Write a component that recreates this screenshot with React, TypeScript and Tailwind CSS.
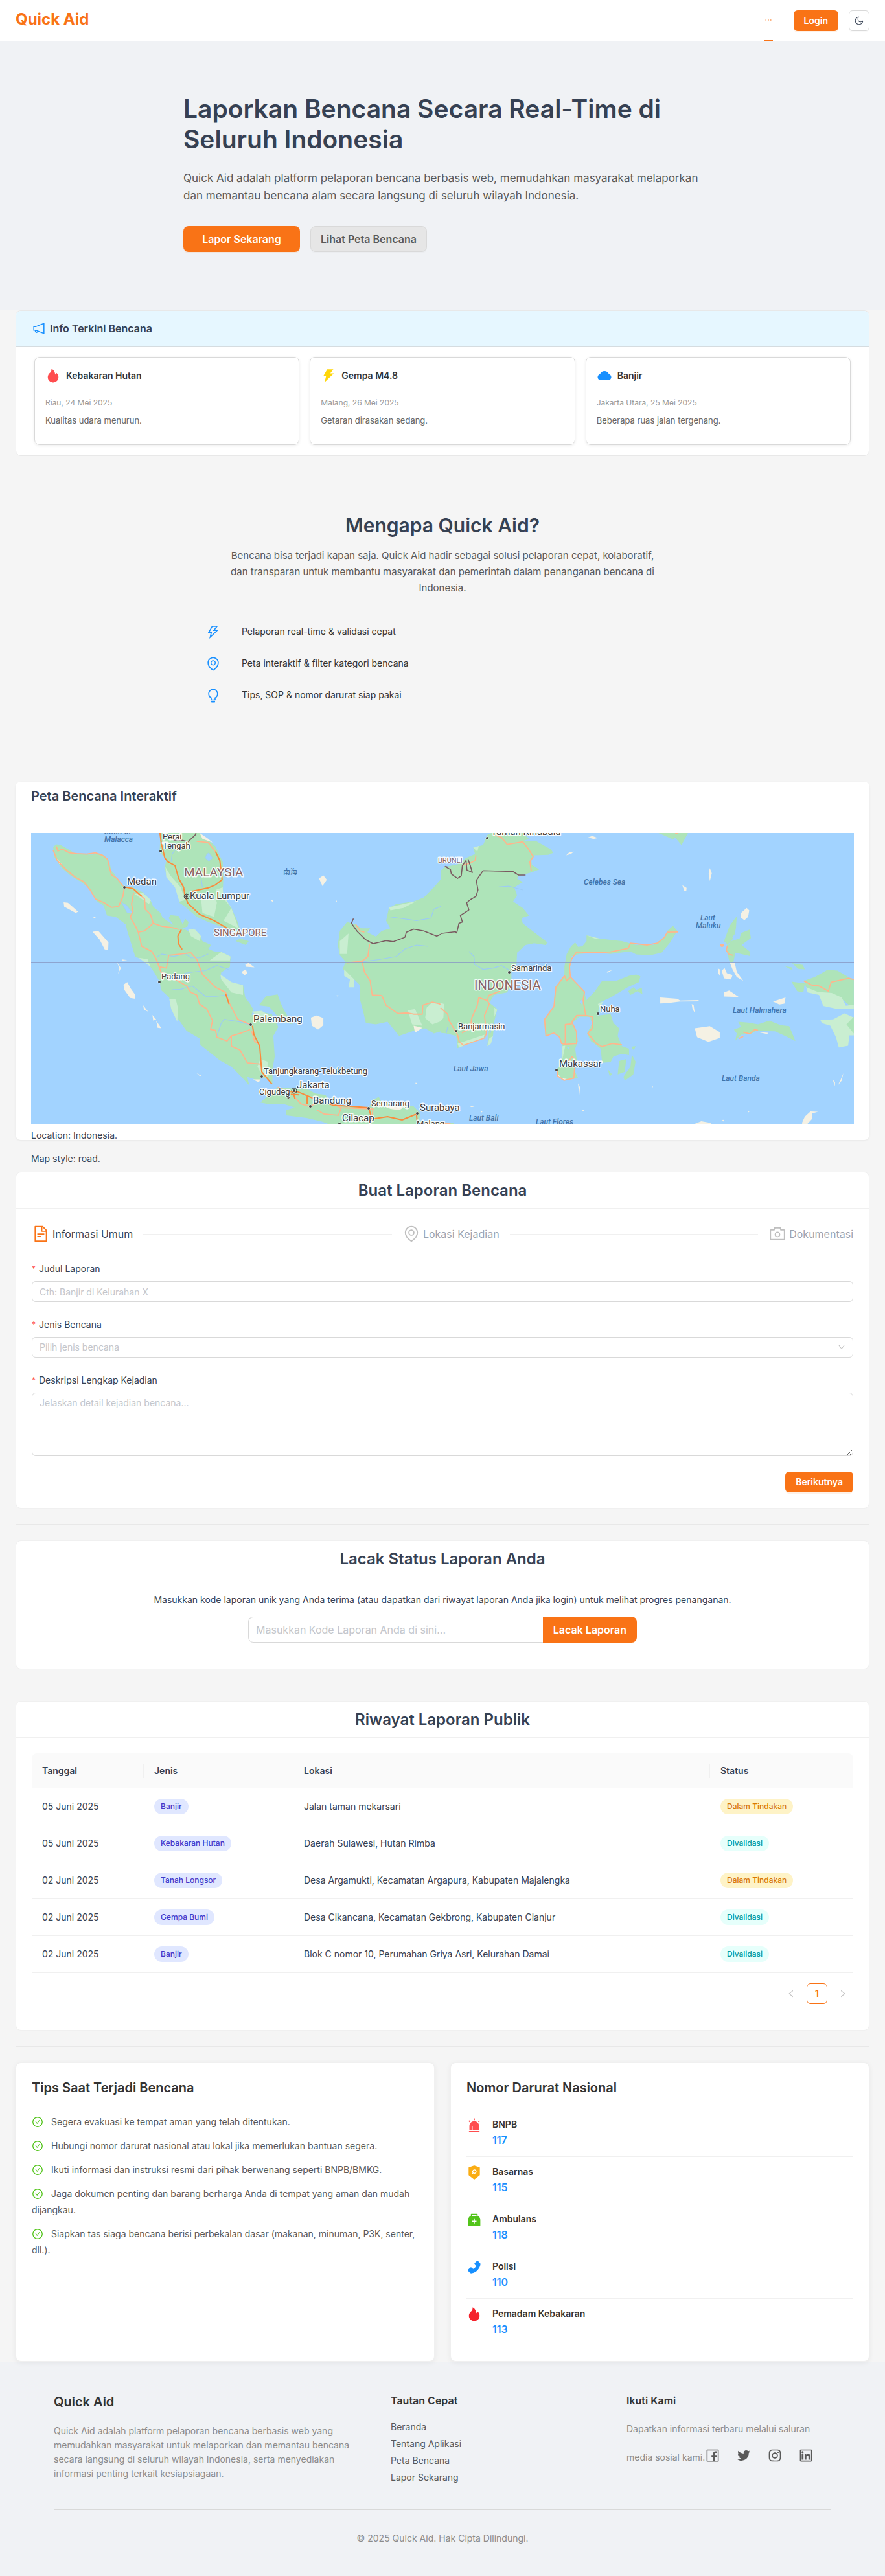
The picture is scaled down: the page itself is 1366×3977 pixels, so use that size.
import type { ReactNode } from "react";
import {
  AiFillAlert,
  AiFillCloud,
  AiFillFire,
  AiFillMedicineBox,
  AiFillPhone,
  AiFillSecurityScan,
  AiFillThunderbolt,
  AiOutlineBulb,
  AiOutlineCamera,
  AiOutlineCheckCircle,
  AiOutlineDown,
  AiOutlineEllipsis,
  AiOutlineEnvironment,
  AiOutlineFacebook,
  AiOutlineFileText,
  AiOutlineInstagram,
  AiOutlineLeft,
  AiOutlineLinkedin,
  AiOutlineMoon,
  AiOutlineNotification,
  AiOutlineRight,
  AiOutlineThunderbolt,
  AiOutlineTwitter,
} from "react-icons/ai";

function Divider() {
  return <hr className="my-6 border-0 border-t border-[#e8e8e8]" />;
}

function Panel({ title, children }: { title: string; children: ReactNode }) {
  return (
    <section className="rounded-lg border border-[#f0f0f0] bg-white">
      <h2 className="flex h-14 items-center justify-center border-b border-[#f0f0f0] px-6 text-2xl font-semibold text-gray-700">
        {title}
      </h2>
      <div className="p-6">{children}</div>
    </section>
  );
}

function Header() {
  return (
    <header className="flex h-16 items-center justify-between border-b border-[#f0f0f0] bg-white px-6">
      <a href="#" className="pb-1 text-2xl font-bold text-[#f97316]">
        Quick Aid
      </a>
      <div className="flex h-full items-center gap-4">
        <nav className="mr-4 flex h-full items-center border-b-2 border-[#f97316]">
          <button type="button" aria-label="Menu" className="text-[#f97316]">
            <AiOutlineEllipsis size={14} />
          </button>
        </nav>
        <button
          type="button"
          className="h-8 rounded-md bg-[#f97316] px-4 text-sm font-semibold text-white shadow-[0_2px_0_rgba(249,115,22,0.1)]"
        >
          Login
        </button>
        <button
          type="button"
          aria-label="Mode gelap"
          className="flex size-8 items-center justify-center rounded-md border border-[#d9d9d9] bg-white text-gray-700 shadow-[0_2px_0_rgba(0,0,0,0.02)]"
        >
          <AiOutlineMoon size={16} />
        </button>
      </div>
    </header>
  );
}

function Hero() {
  return (
    <section className="bg-[#f0f2f5] px-6 pt-20 pb-[90px]">
      <div className="mx-auto max-w-[800px]">
        <h1 className="mb-6 text-[39px] leading-[47px] font-semibold text-gray-700">
          Laporkan Bencana Secara Real-Time di Seluruh Indonesia
        </h1>
        <p className="mb-[33px] text-[17px] leading-[27px] text-[#595959]">
          Quick Aid adalah platform pelaporan bencana berbasis web, memudahkan masyarakat melaporkan dan memantau
          bencana alam secara langsung di seluruh wilayah Indonesia.
        </p>
        <div className="flex gap-4">
          <button
            type="button"
            className="h-10 w-[180px] rounded-lg bg-[#f97316] text-base font-semibold text-white shadow-[0_2px_0_rgba(249,115,22,0.1)]"
          >
            Lapor Sekarang
          </button>
          <button
            type="button"
            className="h-10 w-[180px] rounded-lg border border-[#d9d9d9] bg-[#e6e6e6] text-base font-semibold text-[#595959] shadow-[0_2px_0_rgba(0,0,0,0.02)]"
          >
            Lihat Peta Bencana
          </button>
        </div>
      </div>
    </section>
  );
}

const news = [
  { icon: <AiFillFire size={24} color="#ff4d4f" />, title: "Kebakaran Hutan", date: "Riau, 24 Mei 2025", text: "Kualitas udara menurun." },
  { icon: <AiFillThunderbolt size={24} color="#ffd60a" />, title: "Gempa M4.8", date: "Malang, 26 Mei 2025", text: "Getaran dirasakan sedang." },
  { icon: <AiFillCloud size={24} color="#1890ff" />, title: "Banjir", date: "Jakarta Utara, 25 Mei 2025", text: "Beberapa ruas jalan tergenang." },
];

function LatestInfo() {
  return (
    <section className="overflow-hidden rounded-lg border border-[#e8e8e8] bg-white">
      <h2 className="flex h-[55px] items-center gap-1.5 border-b border-[#d5dce0] bg-[#e6f7ff] px-6 text-base font-semibold text-gray-700">
        <AiOutlineNotification size={22} color="#1890ff" />
        Info Terkini Bencana
      </h2>
      <div className="grid grid-cols-3 gap-4 px-7 py-4">
        {news.map((n) => (
          <article key={n.title} className="h-34 rounded-lg border border-[#d9d9d9] p-4 shadow-[0_1px_4px_rgba(0,0,0,0.08)]">
            <h3 className="mb-5 flex h-6 items-center gap-2 text-sm font-semibold text-[#333333]">
              {n.icon}
              {n.title}
            </h3>
            <p className="mb-1.5 text-xs leading-5 text-[#999999]">{n.date}</p>
            <p className="text-[13px] leading-[22px] text-[#666666]">{n.text}</p>
          </article>
        ))}
      </div>
    </section>
  );
}

const reasons = [
  { icon: <AiOutlineThunderbolt size={24} color="#1890ff" />, text: "Pelaporan real-time & validasi cepat" },
  { icon: <AiOutlineEnvironment size={24} color="#1890ff" />, text: "Peta interaktif & filter kategori bencana" },
  { icon: <AiOutlineBulb size={24} color="#1890ff" />, text: "Tips, SOP & nomor darurat siap pakai" },
];

function WhyUs() {
  return (
    <section className="pt-10 pb-[47px]">
      <h2 className="text-center text-3xl leading-9 font-semibold text-gray-700">Mengapa Quick Aid?</h2>
      <p className="mx-auto mt-4 max-w-[670px] text-center text-[15px] leading-[25px] text-[#595959]">
        Bencana bisa terjadi kapan saja. Quick Aid hadir sebagai solusi pelaporan cepat, kolaboratif, dan transparan
        untuk membantu masyarakat dan pemerintah dalam penanganan bencana di Indonesia.
      </p>
      <ul className="mx-auto mt-11 max-w-[732px]">
        {reasons.map((r) => (
          <li key={r.text} className="flex h-[49px] items-start gap-8">
            <span>{r.icon}</span>
            <span className="text-sm leading-[22px] text-[#333333]">{r.text}</span>
          </li>
        ))}
      </ul>
    </section>
  );
}

const cities: [string, number, number, number, number, number][] = [
  ["Medan", 148, 80, 15, 144, 84],
  ["Kuala Lumpur", 245, 102, 15, 240, 98],
  ["Padang", 201, 226, 13, 198, 230],
  ["Palembang", 343, 292, 15, 339, 296],
  ["Tanjungkarang-Telukbetung", 359, 372, 13, 356, 376],
  ["Jakarta", 410, 394, 15, 406, 398],
  ["Cigudeg", 352, 404, 13, 397, 408],
  ["Bandung", 435, 418, 15, 431, 422],
  ["Semarang", 525, 422, 13, 521, 425],
  ["Surabaya", 600, 429, 15, 596, 433],
  ["Cilacap", 480, 445, 15, 476, 449],
  ["Malang", 595, 453, 13, 592, 460],
  ["Perai", 203, 10, 13, 200, 28],
  ["Tengah", 203, 24, 13, 200, 28],
  ["Taman Kinabalu", 710, 3, 15, 704, 8],
  ["Samarinda", 741, 213, 13, 738, 215],
  ["Banjarmasin", 659, 303, 13, 656, 306],
  ["Nuha", 878, 276, 13, 875, 279],
  ["Makassar", 815, 361, 15, 811, 366],
];

const seas: [string, number, number][] = [
  ["Strait of", 113, 2],
  ["Malacca", 113, 14],
  ["Celebes Sea", 853, 80],
  ["Laut", 1033, 135],
  ["Maluku", 1026, 147],
  ["Laut Jawa", 652, 368],
  ["Laut Bali", 676, 444],
  ["Laut Flores", 779, 450],
  ["Laut Halmahera", 1083, 278],
  ["Laut Banda", 1066, 383],
];

const countries: [string, number, number, number][] = [
  ["MALAYSIA", 236, 67, 19],
  ["SINGAPORE", 282, 159, 15],
  ["BRUNEI", 628, 46, 11],
  ["INDONESIA", 684, 242, 20],
];

function IndonesiaMap() {
  return (
    <svg
      role="img"
      aria-label="Peta Indonesia"
      viewBox="0 0 1270 450"
      preserveAspectRatio="xMidYMid slice"
      className="block h-[450px] w-full bg-[#a2d3ff]"
    >
      <rect width="1270" height="450" fill="#a2d3ff" />
      {/* western half: Sumatra, the Malay peninsula, Java, west Borneo */}
      <g transform="translate(-48 -86) scale(0.4464 0.3954)">
        <g fill="#aee4b9">
          <path d="M184 272L195 262L210 265L235 280L262 300L320 302L345 297L360 305L378 328L385 365L398 380L402 395L430 425L460 430L495 450L520 480L530 505L555 530L562 548L590 570L600 577L583 550L590 538L618 542L632 575L640 552L652 565L648 583L630 590L650 600L665 590L690 612L700 640L730 655L720 670L740 680L765 682L797 700L795 740L765 762L762 785L805 805L840 810L848 860L865 885L875 905L870 930L895 915L940 925L962 975L945 1010L950 1090L942 1140L942 1200L925 1180L905 1170L895 1190L878 1178L855 1170L862 1203L835 1170L800 1130L760 1105L693 1045L690 1020L645 990L620 950L592 905L585 860L556 830L553 800L535 765L505 715L468 702L440 600L435 575L400 545L370 540L358 500L335 485L305 430L275 405L245 385L210 350L187 310Z" />
          <path d="M555 217L690 217L720 245L745 270L770 330L772 400L770 460L800 510L820 560L830 595L800 600L770 585L720 565L680 545L640 505L620 490L635 470L610 430L575 385L570 350L575 325L552 290Z" />
          <path d="M960 1210L1010 1215L1060 1215L1090 1235L1125 1240L1150 1280L1190 1283L1275 1290L1290 1258L1310 1248L1320 1270L1430 1285L1452 1310L1450 1340L1568 1350L1568 1360L1150 1360L1115 1345L1060 1330L990 1320L988 1300L1020 1290L980 1275L925 1275L900 1270L935 1235Z" />
          <path d="M895 890L920 855L960 848L970 880L985 915L1012 965L975 955L950 920L930 895Z" />
          <path d="M1215 570L1200 565L1175 600L1168 655L1175 695L1195 720L1185 750L1225 790L1243 810L1245 870L1255 910L1265 960L1300 965L1340 955L1380 1010L1430 990L1470 980L1500 1000L1530 990L1568 1005L1568 345L1540 350L1535 385L1500 430L1465 470L1430 485L1370 495L1345 510L1335 560L1350 590L1320 600L1300 622L1270 605L1280 590L1250 590L1230 575Z" />
          <path d="M690 660L720 668L712 695L695 690ZM815 640L830 630L860 640L850 655Z" />
        </g>
        <g fill="#c9eed1">
          <path d="M695 470L740 450L750 490L740 545L700 530ZM572 350L590 385L625 430L640 480L620 485L605 430L575 390Z" />
          <path d="M773 560L800 510L770 470L745 440L770 430L772 460L800 510L825 590Z" />
          <path d="M725 715L765 682L797 700L795 715ZM762 770L800 800L840 812L840 850L800 840L765 790ZM585 865L608 868L615 900L613 955L592 905Z" />
          <path d="M650 592L675 595L695 620L690 640L660 620ZM465 455L495 452L522 480L515 495ZM890 1130L900 1100L925 1110L925 1170L900 1150ZM870 915L905 912L930 930L895 935ZM480 705L510 710L520 740Z" />
          <path d="M1345 508L1440 484L1395 510L1350 520ZM1175 640L1205 610L1200 690L1175 690ZM1475 900L1495 878L1530 885L1530 950L1495 965L1470 940ZM1410 910L1435 905L1460 970L1425 965ZM1190 750L1225 790L1225 820L1205 820L1210 790L1190 775Z" />
        </g>
        <g fill="#f5f1e4">
          <path d="M220 488L235 490L270 525L262 530L222 505ZM320 603L340 600L375 645L374 674L362 672L345 635ZM427 810L440 800L452 825L468 850L468 865L450 862L430 830ZM495 890L512 915L498 908ZM527 928L540 945L530 950ZM540 950L558 980L545 978ZM404 722L418 745L408 768L413 745ZM422 711L440 714L424 716ZM320 542L334 550L325 550Z" />
          <path d="M1075 938L1095 930L1118 940L1118 968L1100 985L1078 970ZM1103 395L1118 383L1130 400L1115 425ZM848 730L860 725L880 742L850 740ZM835 760L850 750L855 765L845 773ZM935 480L943 480L943 487ZM1160 483L1165 482L1164 488ZM1430 970L1460 978L1435 998ZM680 1156L697 1165L690 1166ZM1330 1285L1360 1265L1395 1290L1380 1300L1350 1295ZM690 217L720 240L735 255L700 240ZM195 315L215 342L205 338ZM875 1180L900 1180L895 1192ZM1435 1193L1443 1193L1440 1199ZM1162 852L1170 851L1168 857Z" />
        </g>
        <g fill="none" stroke="#9ccbf5" strokeWidth="1.2">
          <path d="M592 330L595 300L610 275M700 430L695 390L680 360M545 700L560 690L600 700L640 688L660 705L690 705L720 690M600 790L640 765L670 760L710 755L750 735L790 750M595 830L625 828L665 815L710 855L745 855L790 850M750 1010L765 960L775 945L830 955L860 965M1348 545L1440 560L1490 550L1500 515L1540 497M1255 720L1310 712L1370 700L1400 670L1440 655L1480 660" vectorEffect="non-scaling-stroke" />
          <path fill="#a2d3ff" d="M420 488L438 500L458 530L440 530ZM715 300L722 295L735 315L722 328L710 315Z" />
        </g>
        <g fill="none" stroke="#ffb58c" strokeWidth="1.8" strokeLinejoin="round">
          <path d="M184 285L198 325L230 362L260 390L290 408L312 440L330 475L360 490L385 508L410 505L425 465L430 430M195 270L200 288L215 280L240 295L265 298L300 300L330 295L355 305L372 320L378 350L385 380L405 395L425 425M465 440L500 475L502 515L520 535L530 570L560 582L600 588L620 595M530 570L500 600L478 605M462 450L455 495L460 525L450 545L470 585L478 605L490 660L525 680L540 710L550 740L575 745L580 720L583 695L625 690L660 685L680 710L690 740L700 770L745 820L780 840L792 880L822 945L865 965M545 720L556 760L600 785L645 815L660 840L680 850L690 885L715 905L735 950L728 985L745 988L750 1015L785 1030L800 1010L835 998L865 985M800 1010L800 1050L830 1065L855 1115L902 1120M870 990L880 1030L900 1048" vectorEffect="non-scaling-stroke" />
          <path d="M680 250L720 255L745 290M1230 575L1245 600L1260 605M1278 650L1272 700L1252 718L1200 725M1252 718L1260 760L1280 795L1287 850L1320 852L1335 890L1375 922L1410 920L1430 925L1460 925L1462 890L1495 878L1520 885L1545 905L1550 950L1568 975M960 1210L1000 1230M1020 1250L1040 1275L1070 1285L1120 1260L1180 1290L1170 1320L1120 1315L1095 1298M1180 1290L1290 1295L1285 1330" vectorEffect="non-scaling-stroke" />
        </g>
        <g fill="none" stroke="#fb8a3c" strokeWidth="2" strokeLinejoin="round">
          <path d="M553 217L558 260L570 315L580 330L605 345L618 395L635 430L640 465L650 492L690 535L740 560L795 595M745 290L760 325L768 400L745 420L720 432L665 445M627 595L615 620L617 650L630 672M430 428L460 435L490 465M873 970L878 1005L898 1050L905 1150L940 1198M780 845L792 885M1000 1228L1030 1228L1080 1252L1150 1280L1210 1285L1275 1290L1285 1335L1340 1325L1390 1338L1440 1315L1442 1340M1005 1238L1035 1240M1062 1245L1062 1275M1016 1240L1020 1255" vectorEffect="non-scaling-stroke" />
        </g>
        <g fill="none" stroke="#7a5a60" strokeWidth="1.6" strokeLinejoin="round">
          <path d="M597 230L600 245L625 245L650 252L675 225L678 217M1222 552L1215 570L1235 602L1265 635L1290 650L1335 638L1360 642L1400 625L1405 605L1430 593L1465 600L1510 620L1540 605L1568 602M1540 348L1558 355L1560 375L1568 377" vectorEffect="non-scaling-stroke" />
        </g>
      </g>
      {/* eastern half: east Borneo, Sulawesi, Maluku, Papua */}
      <g transform="translate(632 -86) scale(0.4375 0.3954)">
        <g fill="#aee4b9">
          <path d="M0 365L15 350L60 340L90 315L122 300L115 275L150 265L165 225L180 217L290 217L312 240L290 250L335 248L390 282L397 295L380 303L330 305L320 325L322 342L348 360L320 372L275 385L270 395L290 410L260 430L270 460L256 485L290 510L312 540L285 550L290 570L330 605L377 645L370 655L330 648L300 655L270 685L268 730L250 760L250 800L235 840L190 850L172 880L200 905L190 950L185 1010L165 1050L172 975L155 1015L60 1058L55 1010L20 1000L0 998Z" />
          <path d="M445 690L460 660L475 645L485 662L500 660L515 640L515 617L560 630L640 640L690 655L750 655L790 625L800 600L820 580L835 600L810 645L780 685L740 695L690 692L670 680L600 690L550 685L490 690L460 700L455 780L470 795L505 835L515 870L545 835L570 795L620 795L665 775L690 770L705 777L700 800L660 820L600 860L560 880L555 930L600 925L610 960L630 980L625 1010L640 1050L665 1060L665 1085L640 1080L610 1090L600 1112L570 1115L565 1060L530 1030L517 1000L535 960L525 935L490 935L465 960L480 1000L485 1030L475 1060L480 1100L475 1150L485 1175L435 1183L412 1165L410 1140L425 1120L430 1050L418 1010L395 998L370 1010L365 945L400 900L403 820L437 775L437 740Z" />
          <path d="M768 217L873 217L850 265L828 235L820 242ZM630 1108L655 1100L650 1150L625 1160ZM675 1083L688 1110L680 1160L650 1185L645 1170L670 1130ZM590 1140L605 1160L597 1168ZM672 1052L688 1050L682 1066ZM662 835L680 820L690 830L710 822L712 848L695 835L670 850Z" />
          <path d="M1045 543L1020 580L1000 640L1015 655L1035 625L1042 590ZM1025 640L1055 630L1060 608L1090 595L1095 628L1062 655L1090 680L1092 698L1040 685L1033 722L1020 722L1012 690L1010 655Z" />
          <path d="M1050 955L1085 958L1120 965L1160 950L1200 968L1230 972L1252 1030L1215 1010L1180 992L1115 990L1095 1002L1060 1005L1040 1028L1045 1000L1035 985L1060 975Z" />
          <path d="M1282 795L1320 780L1365 752L1400 755L1458 792L1458 905L1420 870L1380 845L1330 850L1290 820ZM1240 726L1278 733L1285 750L1262 748ZM1215 738L1240 742L1238 752ZM1238 798L1262 802L1285 805L1280 840L1258 835Z" />
          <path d="M0 1345L35 1352L35 1360L0 1360Z" />
        </g>
        <g fill="#c9eed1">
          <path d="M1290 820L1330 838L1380 842L1415 860L1430 892L1458 888L1458 905L1400 905L1350 893L1335 850L1295 840ZM1340 948L1385 945L1425 922L1458 938L1458 1008L1442 1008L1438 1048L1405 1055L1395 1015L1375 970L1345 960Z" />
          <path d="M0 880L12 885L10 940L0 950ZM60 1040L155 1005L152 1018L65 1055ZM515 617L560 630L550 632ZM165 1050L172 1020L185 1010L178 1040ZM430 1050L440 1048L430 1100ZM190 900L200 908L190 935ZM555 885L575 875L560 900ZM115 275L135 268L130 290Z" />
          <path fill="#aee4b9" d="M1432 965L1458 935L1458 1000Z" />
        </g>
        <g fill="#f5f1e4">
          <path d="M520 235L535 229L555 237L540 241ZM443 305L455 292L470 290L460 300ZM950 355L957 375L950 405L946 375ZM853 422L868 432L867 444L860 444ZM1060 530L1080 510L1089 520L1085 545L1072 558L1060 548ZM1020 722L1038 724L1045 760L1068 795L1045 780L1030 750ZM992 755L1002 745L1010 765L1030 772L1025 790L1000 785ZM978 746L985 750L985 775L980 765ZM1000 840L1018 833L1052 858L1000 856ZM775 860L835 865L845 872L910 870L912 875L845 876L800 882L775 883ZM886 885L893 890L897 920L889 905ZM1173 876L1217 860L1213 884L1195 887ZM897 980L950 972L985 995L985 1018L945 1033L905 1015ZM1115 994L1155 998L1153 1003ZM485 1195L492 1210L489 1243ZM410 1150L425 1175L445 1178L435 1184L412 1168Z" />
          <path d="M1275 1350L1285 1325L1305 1305L1332 1306L1312 1312L1310 1335L1292 1356L1277 1356ZM890 1356L920 1343L955 1350L950 1356ZM1384 1182L1392 1190L1391 1206ZM1421 1155L1415 1185L1402 1202L1412 1180ZM994 1338L1001 1337L997 1344ZM498 1298L508 1299L503 1305ZM1083 1302L1091 1303L1087 1309ZM102 1284L122 1284L110 1288ZM141 1302L148 1306L145 1309ZM583 760L605 753L590 763ZM746 1206L750 1208L748 1211Z" />
        </g>
        <path d="M205 428L240 425L290 440M100 680L118 700L120 730L150 750L185 745L215 735L245 755M20 1000L25 975M185 960L175 1000" fill="none" stroke="#9ccbf5" strokeWidth="1.2" vectorEffect="non-scaling-stroke" />
        <path fill="#a2d3ff" d="M491 875L503 865L500 890ZM1028 625L1040 610L1042 630ZM445 1052L456 1053L450 1062Z" />
        <g fill="none" stroke="#ffb58c" strokeWidth="1.8" strokeLinejoin="round">
          <path d="M75 345L105 335L122 325L125 305M190 225L215 235L235 262L290 252L310 280L327 310L315 330L320 365M210 835L170 852L165 872L135 860L130 890L110 940L105 980L75 998M165 872L172 885L155 930L162 1000L155 1018L80 1047L65 1030L60 1005L30 950L25 925L0 900" vectorEffect="non-scaling-stroke" />
          <path d="M838 604L800 605L790 625L765 648L730 655L670 648L662 668L600 682L540 685L480 682L462 710L455 740L458 780L480 805L508 838L503 870L512 930L480 930L463 955L480 995L480 1040L440 1043L427 1040L420 1015L400 998L372 1010L367 945L400 895L407 820L437 775L445 795L458 780M512 930L535 935L535 980L520 1000L550 1040L570 1052L605 1040L640 1045M440 1043L440 965L463 963M450 1110L465 1090L475 1110L470 1175L435 1183L412 1165L412 1145" vectorEffect="non-scaling-stroke" />
          <path d="M1012 658L1008 675L1018 692L1033 695M1282 795L1310 812L1335 815L1368 835L1378 800L1440 785L1458 790M1068 995L1090 1002L1108 985L1120 988M1052 1020L1068 1012M0 1348L35 1353M828 220L838 220" vectorEffect="non-scaling-stroke" />
        </g>
        <circle cx="993" cy="656" r="6" fill="#ffb58c" />
        <path d="M0 610L52 603L57 608L65 570L77 565L70 540L100 518L92 490L105 478L125 465L132 440L126 403L150 365L255 368L275 382L300 382M15 348L35 360L38 378L60 395L73 385L77 345L90 325M97 320L105 345L112 372L93 362L90 325" fill="none" stroke="#7a5a60" strokeWidth="1.6" strokeLinejoin="round" vectorEffect="non-scaling-stroke" />
      </g>
      <path d="M0 199.500H1270" stroke="#8899c4" strokeOpacity="0.8" />
      <g fontFamily="Roboto, sans-serif" paintOrder="stroke" strokeLinejoin="round">
        {seas.map(([t, x, y]) => (
          <text key={t} x={x} y={y} fontSize="12" fontStyle="italic" fontWeight="500" fill="#4273a8">
            {t}
          </text>
        ))}
        <text x="389" y="64" fontSize="11" fontWeight="500" fill="#4273a8" fontFamily="'Noto Sans CJK SC', sans-serif">
          南海
        </text>
        {countries.map(([t, x, y, s]) => (
          <text key={t} x={x} y={y} fontSize={s} fill="#8b6464" stroke="#ffffff" strokeWidth="3" strokeOpacity="0.85">
            {t}
          </text>
        ))}
        {cities.map(([t, x, y, s, cx, cy]) => (
          <g key={t}>
            <circle cx={cx} cy={cy} r="2" fill="#444444" stroke="#ffffff" strokeWidth="1" />
            <text x={x} y={y} fontSize={s} fill="#3c3c3c" stroke="#ffffff" strokeWidth="3" strokeOpacity="0.9">
              {t}
            </text>
          </g>
        ))}
        <circle cx="240" cy="98" r="4" fill="none" stroke="#444444" />
        <circle cx="406" cy="398" r="4" fill="none" stroke="#444444" />
      </g>
    </svg>
  );
}

function MapCard() {
  return (
    <section className="rounded-lg bg-white shadow-[0_1px_3px_rgba(0,0,0,0.06)]">
      <h2 className="flex h-[55px] items-start border-b border-[#f0f0f0] px-6 pt-2 text-xl leading-7 font-semibold text-gray-700">
        Peta Bencana Interaktif
      </h2>
      <div className="p-6">
        <div className="h-[450px]">
          <IndonesiaMap />
          <div className="relative mt-1.5 flex flex-col gap-3.5 text-sm leading-[22px] text-gray-700">
            <p>Location: Indonesia.</p>
            <p>Map style: road.</p>
          </div>
        </div>
      </div>
    </section>
  );
}

function Label({ htmlFor, children }: { htmlFor: string; children: ReactNode }) {
  return (
    <label htmlFor={htmlFor} className="mb-2 flex items-center gap-1 text-sm leading-[22px] text-gray-700">
      <span className="w-[7px] text-xs leading-[22px] text-[#ff4d4f]">*</span>
      {children}
    </label>
  );
}

function ReportForm() {
  return (
    <Panel title="Buat Laporan Bencana">
      <ol className="mb-7 flex h-[30px] items-center gap-4 text-base">
        <li className="flex items-center gap-1 text-gray-700">
          <AiOutlineFileText size={28} color="#f97316" />
          Informasi Umum
        </li>
        <li aria-hidden="true" className="h-px flex-1 bg-[#f0f0f0]" />
        <li className="flex items-center gap-1 text-[#9ca3af]">
          <AiOutlineEnvironment size={28} color="#bfbfbf" />
          Lokasi Kejadian
        </li>
        <li aria-hidden="true" className="h-px flex-1 bg-[#f0f0f0]" />
        <li className="flex items-center gap-1 text-[#9ca3af]">
          <AiOutlineCamera size={28} color="#bfbfbf" />
          Dokumentasi
        </li>
      </ol>
      <form className="flex flex-col gap-6">
        <div>
          <Label htmlFor="judul">Judul Laporan</Label>
          <input
            id="judul"
            type="text"
            placeholder="Cth: Banjir di Kelurahan X"
            className="block h-8 w-full rounded-md border border-[#d9d9d9] px-[11px] text-sm placeholder:text-[#c4c6cb]"
          />
        </div>
        <div>
          <Label htmlFor="jenis">Jenis Bencana</Label>
          <div className="relative">
            <select
              id="jenis"
              defaultValue=""
              className="block h-8 w-full appearance-none rounded-md border border-[#d9d9d9] bg-white px-[11px] text-sm text-[#c4c6cb]"
            >
              <option value="">Pilih jenis bencana</option>
              <option>Banjir</option>
              <option>Gempa Bumi</option>
              <option>Kebakaran Hutan</option>
              <option>Tanah Longsor</option>
            </select>
            <AiOutlineDown size={12} color="#bfbfbf" className="pointer-events-none absolute top-2.5 right-3" />
          </div>
        </div>
        <div>
          <Label htmlFor="deskripsi">Deskripsi Lengkap Kejadian</Label>
          <textarea
            id="deskripsi"
            placeholder="Jelaskan detail kejadian bencana..."
            className="block h-[98px] w-full rounded-md border border-[#d9d9d9] px-[11px] py-1 text-sm leading-[22px] placeholder:text-[#c4c6cb]"
          />
        </div>
        <button
          type="button"
          className="h-8 self-end rounded-md bg-[#f97316] px-4 text-sm font-semibold text-white shadow-[0_2px_0_rgba(249,115,22,0.1)]"
        >
          Berikutnya
        </button>
      </form>
    </Panel>
  );
}

function TrackReport() {
  return (
    <Panel title="Lacak Status Laporan Anda">
      <div className="pb-4 text-center">
        <label htmlFor="kode" className="mb-[15px] block text-sm leading-[22px] text-gray-700">
          Masukkan kode laporan unik yang Anda terima (atau dapatkan dari riwayat laporan Anda jika login) untuk melihat
          progres penanganan.
        </label>
        <form className="mx-auto flex max-w-[600px]">
          <input
            id="kode"
            type="text"
            placeholder="Masukkan Kode Laporan Anda di sini..."
            className="h-10 min-w-0 flex-1 rounded-l-lg border border-r-0 border-[#d9d9d9] px-[11px] text-base placeholder:text-[#c4c6cb]"
          />
          <button type="button" className="h-10 rounded-r-lg bg-[#f97316] px-4 text-base font-semibold text-white">
            Lacak Laporan
          </button>
        </form>
      </div>
    </Panel>
  );
}

const reports = [
  ["05 Juni 2025", "Banjir", "Jalan taman mekarsari", "Dalam Tindakan"],
  ["05 Juni 2025", "Kebakaran Hutan", "Daerah Sulawesi, Hutan Rimba", "Divalidasi"],
  ["02 Juni 2025", "Tanah Longsor", "Desa Argamukti, Kecamatan Argapura, Kabupaten Majalengka", "Dalam Tindakan"],
  ["02 Juni 2025", "Gempa Bumi", "Desa Cikancana, Kecamatan Gekbrong, Kabupaten Cianjur", "Divalidasi"],
  ["02 Juni 2025", "Banjir", "Blok C nomor 10, Perumahan Griya Asri, Kelurahan Damai", "Divalidasi"],
];

function PublicReports() {
  return (
    <Panel title="Riwayat Laporan Publik">
      <table className="w-full table-fixed border-separate border-spacing-0 text-left text-sm text-gray-700">
        <colgroup>
          <col className="w-[173px]" />
          <col className="w-[231px]" />
          <col />
          <col className="w-[221px]" />
        </colgroup>
        <thead>
          <tr>
            {["Tanggal", "Jenis", "Lokasi", "Status"].map((h, i) => (
              <th
                key={h}
                scope="col"
                className={
                  "h-[54px] border-b border-[#f0f0f0] bg-[#fafafa] font-semibold " +
                  (i === 0 ? "rounded-tl-lg" : i === 3 ? "rounded-tr-lg" : "")
                }
              >
                <div className={"px-4 leading-[22px] " + (i < 3 ? "border-r border-[#f0f0f0]" : "")}>{h}</div>
              </th>
            ))}
          </tr>
        </thead>
        <tbody>
          {reports.map(([date, kind, place, status], i) => (
            <tr key={i}>
              <td className="h-[57px] border-b border-[#f0f0f0] px-4">{date}</td>
              <td className="border-b border-[#f0f0f0] px-4">
                <span className="inline-block rounded-xl bg-[#e0e7ff] px-2.5 text-xs leading-6 font-medium text-[#4338ca]">
                  {kind}
                </span>
              </td>
              <td className="border-b border-[#f0f0f0] px-4">{place}</td>
              <td className="border-b border-[#f0f0f0] px-4">
                <span
                  className={
                    "inline-block rounded-xl px-2.5 text-xs leading-6 font-medium " +
                    (status === "Divalidasi" ? "bg-[#e6fffb] text-[#08979c]" : "bg-[#fef3c7] text-[#d97706]")
                  }
                >
                  {status}
                </span>
              </td>
            </tr>
          ))}
        </tbody>
      </table>
      <nav aria-label="Halaman" className="my-4 flex justify-end gap-2">
        <button type="button" aria-label="Sebelumnya" className="flex size-8 items-center justify-center text-[#bfbfbf]">
          <AiOutlineLeft size={14} />
        </button>
        <button
          type="button"
          className="size-8 rounded-md border border-[#f97316] bg-white text-sm font-semibold text-[#f97316]"
        >
          1
        </button>
        <button type="button" aria-label="Berikutnya" className="flex size-8 items-center justify-center text-[#bfbfbf]">
          <AiOutlineRight size={14} />
        </button>
      </nav>
    </Panel>
  );
}

const tips = [
  "Segera evakuasi ke tempat aman yang telah ditentukan.",
  "Hubungi nomor darurat nasional atau lokal jika memerlukan bantuan segera.",
  "Ikuti informasi dan instruksi resmi dari pihak berwenang seperti BNPB/BMKG.",
  "Jaga dokumen penting dan barang berharga Anda di tempat yang aman dan mudah dijangkau.",
  "Siapkan tas siaga bencana berisi perbekalan dasar (makanan, minuman, P3K, senter, dll.).",
];

const contacts = [
  { icon: <AiFillAlert size={24} color="#ff4d4f" />, name: "BNPB", phone: "117" },
  { icon: <AiFillSecurityScan size={24} color="#faad14" />, name: "Basarnas", phone: "115" },
  { icon: <AiFillMedicineBox size={24} color="#52c41a" />, name: "Ambulans", phone: "118" },
  { icon: <AiFillPhone size={24} color="#1890ff" />, name: "Polisi", phone: "110" },
  { icon: <AiFillFire size={24} color="#f5222d" />, name: "Pemadam Kebakaran", phone: "113" },
];

function TipsAndContacts() {
  return (
    <div className="grid grid-cols-2 gap-6">
      <section className="min-h-[462px] rounded-lg border border-[#f0f0f0] bg-white p-6 shadow-[0_2px_8px_rgba(0,0,0,0.06)]">
        <h2 className="mb-6.5 text-xl leading-7 font-semibold text-[#333333]">Tips Saat Terjadi Bencana</h2>
        <ul className="flex flex-col gap-3">
          {tips.map((t) => (
            <li key={t} className="text-sm leading-[25px] text-[#595959]">
              <AiOutlineCheckCircle size={18} color="#52c41a" className="mr-3 inline-block align-[-4px]" />
              {t}
            </li>
          ))}
        </ul>
      </section>
      <section className="rounded-lg border border-[#f0f0f0] bg-white px-6 pt-6 shadow-[0_2px_8px_rgba(0,0,0,0.06)]">
        <h2 className="mb-5 text-xl leading-7 font-semibold text-[#333333]">Nomor Darurat Nasional</h2>
        <ul>
          {contacts.map((c) => (
            <li key={c.name} className="flex h-[73px] gap-4 border-b border-[#f0f0f0] pt-3 last:border-b-0">
              {c.icon}
              <div>
                <p className="mb-0.5 text-sm leading-[22px] font-semibold text-[#333333]">{c.name}</p>
                <a href={"tel:" + c.phone} className="block text-base leading-[22px] font-semibold text-[#1890ff]">
                  {c.phone}
                </a>
              </div>
            </li>
          ))}
        </ul>
      </section>
    </div>
  );
}

function Footer() {
  return (
    <footer className="bg-[#f0f2f5] px-6 pt-12 pb-[46px]">
      <div className="mx-auto max-w-[1200px]">
        <div className="grid grid-cols-[520fr_364fr_316fr] border-b border-[#d9d9d9] pb-9">
          <div>
            <h3 className="mb-5 text-xl leading-7 font-semibold text-[#333333]">Quick Aid</h3>
            <p className="max-w-[460px] text-sm leading-[22px] text-[#8c8c8c]">
              Quick Aid adalah platform pelaporan bencana berbasis web yang memudahkan masyarakat untuk melaporkan dan
              memantau bencana secara langsung di seluruh wilayah Indonesia, serta menyediakan informasi penting terkait
              kesiapsiagaan.
            </p>
          </div>
          <div>
            <h3 className="mb-4 text-base leading-6 font-semibold text-[#333333]">Tautan Cepat</h3>
            <ul className="text-sm leading-[26px] text-[#595959]">
              {["Beranda", "Tentang Aplikasi", "Peta Bencana", "Lapor Sekarang"].map((l) => (
                <li key={l}>
                  <a href="#">{l}</a>
                </li>
              ))}
            </ul>
          </div>
          <div>
            <h3 className="mb-2.5 text-base leading-6 font-semibold text-[#333333]">Ikuti Kami</h3>
            <div className="text-sm leading-[44px] text-[#8c8c8c]">
              Dapatkan informasi terbaru melalui saluran media sosial kami.
              <span className="inline-flex gap-6 align-[-4px] text-[#595959]">
                <a href="#" aria-label="Facebook">
                  <AiOutlineFacebook size={24} />
                </a>
                <a href="#" aria-label="Twitter">
                  <AiOutlineTwitter size={24} />
                </a>
                <a href="#" aria-label="Instagram">
                  <AiOutlineInstagram size={24} />
                </a>
                <a href="#" aria-label="LinkedIn">
                  <AiOutlineLinkedin size={24} />
                </a>
              </span>
            </div>
          </div>
        </div>
        <p className="mt-8 text-center text-sm leading-6 text-[#8c8c8c]">© 2025 Quick Aid. Hak Cipta Dilindungi.</p>
      </div>
    </footer>
  );
}

export default function App() {
  return (
    <div className="bg-[#f5f5f5] font-[Inter,sans-serif] text-sm">
      <Header />
      <Hero />
      <main className="px-6">
        <LatestInfo />
        <Divider />
        <WhyUs />
        <Divider />
        <MapCard />
        <Divider />
        <ReportForm />
        <Divider />
        <TrackReport />
        <Divider />
        <PublicReports />
        <Divider />
        <TipsAndContacts />
      </main>
      <Footer />
    </div>
  );
}
